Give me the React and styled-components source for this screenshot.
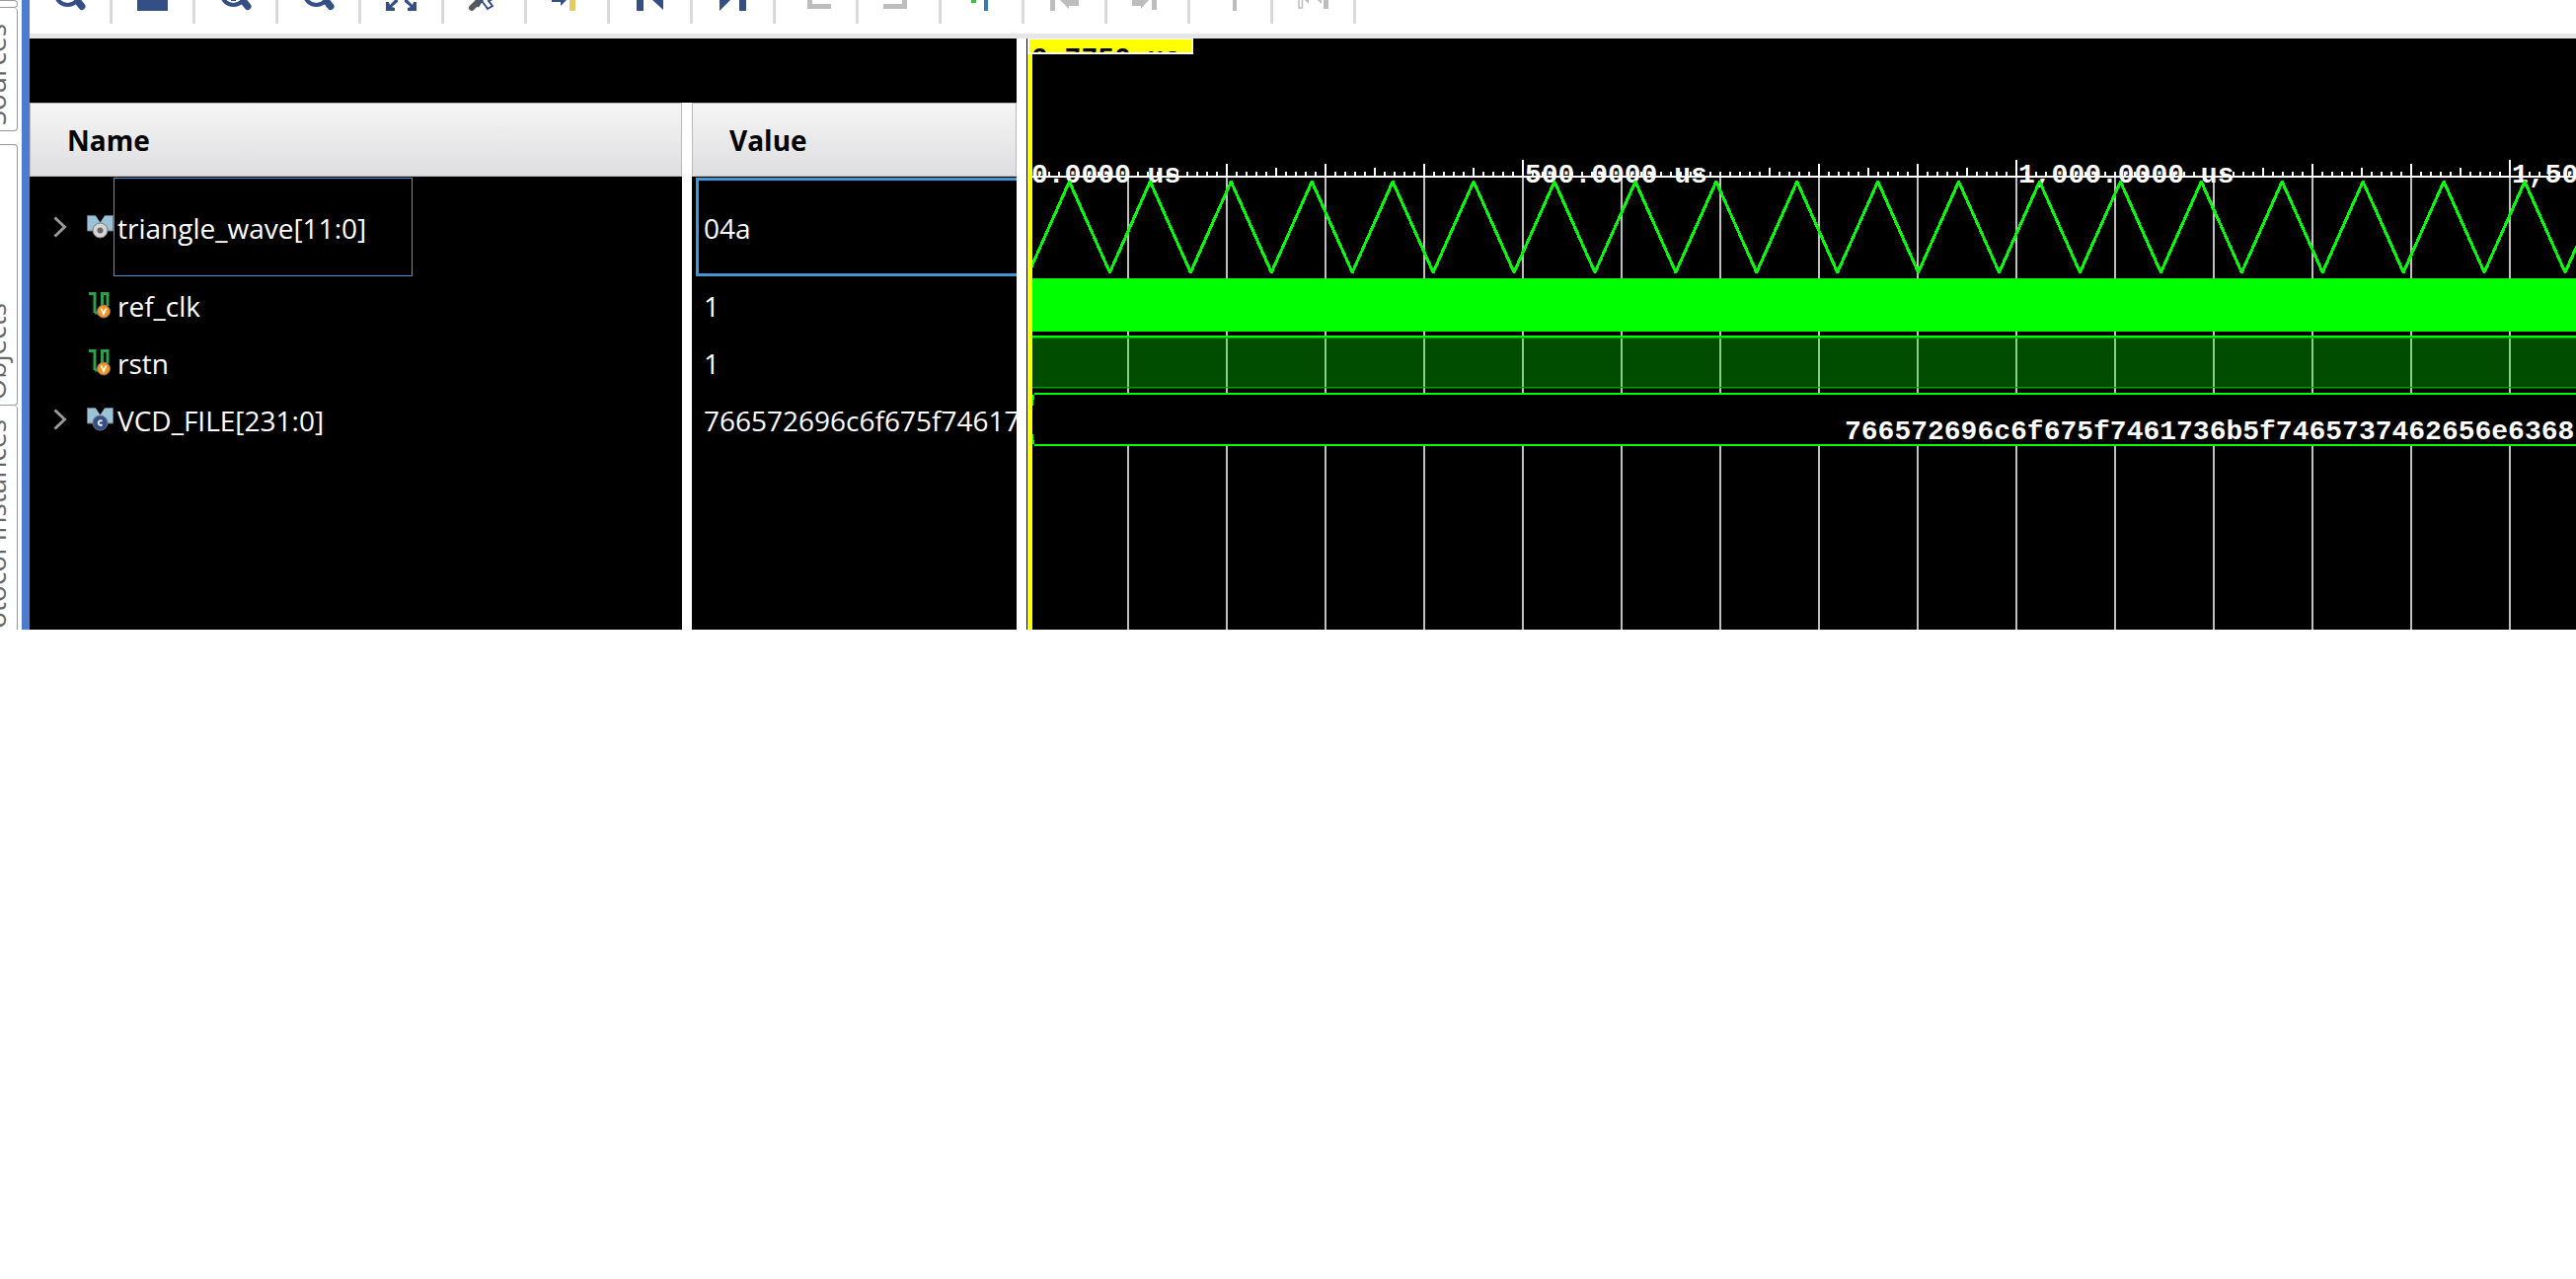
import React from "react";
import styled, { createGlobalStyle } from "styled-components";

const GlobalStyle = createGlobalStyle`
  * { box-sizing: border-box; }
  body { margin: 0; background: #fff; font-family: "Open Sans", "Noto Sans", sans-serif; }
`;

const Window = styled.div`
  display: flex;
  width: 100%;
  height: 638px;
  overflow: hidden;
`;

const TabRail = styled.nav`
  display: flex;
  flex: 0 0 22px;
  flex-direction: column;
  align-items: flex-start;
  overflow: hidden;
`;

const SideTab = styled.button`
  display: flex;
  flex: 0 0 ${(p) => p.$size}px;
  align-items: ${(p) => (p.$cut ? "flex-start" : "flex-end")};
  justify-content: flex-end;
  width: 18px;
  margin: 0 0 ${(p) => p.$gap || 0}px;
  padding: ${(p) => (p.$cut ? "14px 4px 0" : "0 4px 5px")};
  border: 1px solid #999;
  border-left: 0;
  border-top-width: ${(p) => (p.$joined ? 0 : 1)}px;
  border-radius: 0 4px 4px 0;
  background: #fff;
  color: #666;
  font: 28px/36px "Open Sans", "Noto Sans", sans-serif;
  overflow: hidden;
`;

const TabText = styled.span`
  flex: none;
  writing-mode: vertical-rl;
  transform: rotate(180deg);
  white-space: nowrap;
`;

const Pane = styled.main`
  display: flex;
  flex: 1;
  flex-direction: column;
  min-width: 0;
  border-left: 8px solid #4a7dcf;
`;

const Toolbar = styled.div`
  display: flex;
  flex: 0 0 39px;
  align-items: flex-start;
  border-bottom: 5px solid #e6e6e6;
`;

const Tool = styled.button`
  flex: 0 0 84px;
  height: 24px;
  padding: 0;
  border: 0;
  border-right: 3px solid #dadada;
  background: #fff;
  overflow: hidden;

  svg { display: block; }
`;

const Body = styled.div`
  display: flex;
  flex: 1;
  min-height: 0;
`;

const SignalPane = styled.section`
  flex: 0 0 1000px;
  padding-top: 65px;
  background: #000;
  overflow: hidden;
`;

const SignalTable = styled.table`
  width: 100%;
  border-spacing: 0;
  table-layout: fixed;
  color: #fff;
  font-size: 28px;
  line-height: 38px;
`;

const HeadCell = styled.th`
  width: ${(p) => p.$width};
  height: 75px;
  padding: 0;
  border-left: ${(p) => (p.$split ? 10 : 0)}px solid #fff;
  text-align: left;
`;

const HeadLabel = styled.div`
  height: 75px;
  padding: 0 37px;
  border: 1px solid #b9b9b9;
  background: linear-gradient(#f5f5f5, #dedee1);
  color: #000;
  font-weight: 700;
  line-height: 74px;
`;

const NameCell = styled.td`
  height: ${(p) => p.$height}px;
  padding: 0;
`;

const ValueCell = styled(NameCell)`
  border-left: 10px solid #fff;
`;

const NameRow = styled.div`
  display: grid;
  grid-template-columns: 58px 27px max-content;
  align-items: center;
  height: 100%;
`;

const Expander = styled.button`
  height: 36px;
  padding: 0 0 0 24px;
  border: 0;
  background: none;

  svg { display: block; }
`;

const SignalName = styled.span`
  display: flex;
  align-items: center;
  height: ${(p) => (p.$selected ? "100px" : "38px")};
  padding: 2px ${(p) => (p.$selected ? 46 : 0)}px 0 3px;
  border: 1px solid ${(p) => (p.$selected ? "#4096d6" : "transparent")};
`;

const SignalValue = styled.div`
  display: flex;
  align-items: center;
  height: ${(p) => (p.$selected ? "100px" : "38px")};
  margin-left: 4px;
  padding: 2px 0 0 5px;
  border: 3px solid ${(p) => (p.$selected ? "#4096d6" : "transparent")};
  border-width: ${(p) => (p.$selected ? "3px 0 3px 3px" : "0 0 0 3px")};
  white-space: nowrap;
  overflow: hidden;
`;

const WavePane = styled.section`
  position: relative;
  flex: 1;
  min-width: 0;
  border-left: 10px solid #fff;
  background: #000;
  overflow: hidden;

  > svg { display: block; }
`;

const CursorTag = styled.div`
  position: absolute;
  top: 0;
  left: 1px;
  width: 168px;
  height: 16px;
  padding-left: 2px;
  border: 2px solid #fff;
  border-top-width: 1px;
  background: #ff0;
  color: #000;
  font: bold 28px/40px "Liberation Mono", monospace;
  overflow: hidden;
  white-space: nowrap;
`;

const WaveText = styled.text`
  fill: #fff;
  font: bold 28px "Liberation Mono", monospace;
`;

const BLUE = "#344f85";
const GREY = "#bdbdbd";

const Lens = () => (
  <>
    <circle cx="38.5" cy="-7" r="12" fill="none" stroke={BLUE} strokeWidth="4" />
    <path d="M49 1.500L53 6.500" stroke={BLUE} strokeWidth="7" strokeLinecap="round" />
  </>
);

const tools = [
  ["Zoom in", <Lens />],
  ["Save", <path d="M25 0H56V11H25Z" fill={BLUE} />],
  ["Zoom out", <><Lens /><path d="M36 0H41V1H36Z" fill={BLUE} /></>],
  ["Zoom selection", <Lens />],
  ["Zoom fit", <path d="M25 2H28L29 5L34 0H37V2L31 7L34 8V11H25ZM56 2H53L52 5L47 0H44V2L50 7L47 8V11H56Z" fill={BLUE} />],
  ["Go to cursor", <><path d="M28 8L38 -2" stroke="#58595b" strokeWidth="6" strokeLinecap="round" /><path d="M34 7L38 1L42 6L44 9L49 6L45 1L49 -1" fill="none" stroke={BLUE} strokeWidth="2" /></>],
  ["Go to marker", <><path d="M25 0H40L34 6V2H25Z" fill={BLUE} /><path d="M43 0H49V11H43Z" fill="#e2cb66" /></>],
  ["Go to start", <path d="M27 0H34V11H27ZM43 0H54V10Z" fill={BLUE} />],
  ["Go to end", <path d="M27 0H38L27 11ZM47 0H54V11H47Z" fill={BLUE} />],
  ["Previous transition", <path d="M32 0H37V4H56V9H32Z" fill={GREY} />],
  ["Next transition", <path d="M25 4H44V0H49V9H25Z" fill={GREY} />],
  ["Add marker", <><path d="M30 0H35V3H30Z" fill="#44b749" /><path d="M43 0H47V11H43Z" fill="#337ab3" /></>],
  ["Previous marker", <path d="M26 0H31V11H26ZM36 0H55V6H45V9Z" fill={GREY} />],
  ["Next marker", <path d="M25 0H42L34 9V6H25ZM45 0H50V10H45Z" fill={GREY} />],
  ["Float ruler", <path d="M43 0H47V11H43Z" fill={GREY} />],
  ["Swap cursors", <><path d="M26 -2H29.500V8H26Z" fill="none" stroke={GREY} strokeWidth="1.500" /><path d="M32 0H36V4ZM45 0H49V4ZM51 0H56V9H51Z" fill={GREY} /></>],
];

const BusIcon = ({ kind }) => (
  <svg width="27" height="24" viewBox="0 0 27 24">
    <path d="M.5 .5H9L13.500 7L18 .5H26.500V16H.5Z" fill="#9ac3d8" stroke="#66757d" />
    <path d="M9 0L13.500 7L18 0Z" fill="#000" />
    <circle cx="13.500" cy="15.500" r="7.500" fill={kind === "c" ? "#33508d" : "#d5d5d5"} stroke="#777" />
    {kind === "c" ? (
      <path d="M15.500 13.800C13.500 12.300 11.700 13.700 11.700 15.500S13.500 18.700 15.500 17.200" fill="none" stroke="#fff" strokeWidth="1.800" />
    ) : (
      <circle cx="13.500" cy="15.500" r="3" fill="#666" />
    )}
  </svg>
);

const WireIcon = () => (
  <svg width="27" height="27" viewBox="0 0 27 27">
    <path d="M2 1.500H8V21M8 21H15.500V1.500H21V14" fill="none" stroke="#2f9e48" strokeWidth="3" />
    <circle cx="17" cy="19.500" r="6.500" fill="#f7941d" stroke="#777" />
    <path d="M14.500 16.500L17 22L19.500 16.500" fill="none" stroke="#fff" strokeWidth="1.800" />
  </svg>
);

const Chevron = () => (
  <svg width="14" height="22" viewBox="0 0 14 22">
    <path d="M1.500 1.500L11.500 11L1.500 20.500" fill="none" stroke="#999" strokeWidth="3" />
  </svg>
);

const VCD = "766572696c6f675f7461736b5f7465737462656e6368";

const signals = [
  { name: "triangle_wave[11:0]", value: "04a", height: 101, icon: <BusIcon />, bus: true, selected: true },
  { name: "ref_clk", value: "1", height: 58, icon: <WireIcon /> },
  { name: "rstn", value: "1", height: 58, icon: <WireIcon /> },
  { name: "VCD_FILE[231:0]", value: VCD, height: 58, icon: <BusIcon kind="c" />, bus: true },
];

/* Ruler: one pixel per microsecond, measured from the left edge of the wave pane. */
const ORIGIN = 2;
const SPAN = 4000;
const labels = ["0.0000 us", "500.0000 us", "1,000.0000 us", "1,500.0000 us"];

const tickHeight = (t) => {
  if (t % 500 === 0) return 16;
  const label = labels[Math.floor(t / 500)] || "";
  if (t % 500 < label.length * 17 + 14) return 4;
  if (t % 100 === 0) return 12;
  return t % 50 === 0 ? 8 : 4;
};

const ticks = Array.from({ length: SPAN / 10 }, (_, i) => (i + 1) * 10);
const gridTimes = ticks.filter((t) => t % 100 === 0);
const HALF = 40.96;
const triangle = Array.from(
  { length: Math.ceil(SPAN / HALF) },
  (_, i) => `${i ? "L" : "M"}${(ORIGIN + 0.5 + i * HALF).toFixed(2)} ${i % 2 ? 145 : 237}`
).join("");

const Waves = () => (
  <svg width="100%" height="599" shapeRendering="crispEdges">
    {gridTimes.map((t) => (
      <rect key={t} x={ORIGIN + t} y="141" width="2" height="458" fill="#bfbfbf" />
    ))}
    <rect x="0" y="139" width="100%" height="2" fill="#fff" />
    {ticks.map((t) => (
      <rect key={t} x={ORIGIN + t} y={139 - tickHeight(t)} width="2" height={tickHeight(t)} fill="#fff" />
    ))}
    {labels.map((label, i) => (
      <WaveText key={label} x={ORIGIN + 3 + i * 500} y="146">{label}</WaveText>
    ))}
    <path d={triangle} fill="none" stroke="#0f0" strokeWidth="3" strokeLinejoin="bevel" />
    <rect y="243" width="100%" height="54" fill="#0f0" />
    <rect y="303" width="100%" height="52" fill="#0f0" opacity="0.3" />
    <rect y="301" width="100%" height="2" fill="#0f0" />
    <rect y="303" width="100%" height="1" fill="#00a000" />
    <rect y="353" width="100%" height="1" fill="#00a000" />
    <rect y="359" width="100%" height="54" fill="#000" />
    <rect x="8" y="359" width="100%" height="2" fill="#0f0" />
    <rect x="8" y="411" width="100%" height="2" fill="#0f0" />
    <path d="M6 361H8V366H7V372H6ZM6 411H8V407H7V401H6Z" fill="#0f0" />
    <WaveText x="829" y="406">{VCD}</WaveText>
    <rect x="0" y="0" width="1" height="599" fill="#000" />
    <rect x="1" y="0" width="5" height="599" fill="#ff0" />
  </svg>
);

export default function App() {
  return (
    <>
      <GlobalStyle />
      <Window>
        <TabRail>
          <SideTab $size={8} aria-label="Scope" />
          <SideTab $size={125} $gap={13} $joined><TabText>Sources</TabText></SideTab>
          <SideTab $size={265}><TabText>Objects</TabText></SideTab>
          <SideTab $size={300} $joined $cut><TabText>Protocol Instances</TabText></SideTab>
        </TabRail>
        <Pane>
          <Toolbar role="toolbar">
            {tools.map(([label, icon]) => (
              <Tool key={label} aria-label={label}>
                <svg width="81" height="24">{icon}</svg>
              </Tool>
            ))}
          </Toolbar>
          <Body>
            <SignalPane>
              <SignalTable>
                <thead>
                  <tr>
                    <HeadCell $width="661px"><HeadLabel>Name</HeadLabel></HeadCell>
                    <HeadCell $split><HeadLabel>Value</HeadLabel></HeadCell>
                  </tr>
                </thead>
                <tbody>
                  {signals.map((s) => (
                    <tr key={s.name}>
                      <NameCell $height={s.height}>
                        <NameRow>
                          {s.bus ? <Expander aria-label={`Expand ${s.name}`}><Chevron /></Expander> : <span />}
                          {s.icon}
                          <SignalName $selected={s.selected}>{s.name}</SignalName>
                        </NameRow>
                      </NameCell>
                      <ValueCell $height={s.height}>
                        <SignalValue $selected={s.selected}>{s.value}</SignalValue>
                      </ValueCell>
                    </tr>
                  ))}
                  <tr>
                    <NameCell $height={184} />
                    <ValueCell $height={184} />
                  </tr>
                </tbody>
              </SignalTable>
            </SignalPane>
            <WavePane>
              <Waves />
              <CursorTag>0.7750 us</CursorTag>
            </WavePane>
          </Body>
        </Pane>
      </Window>
    </>
  );
}
